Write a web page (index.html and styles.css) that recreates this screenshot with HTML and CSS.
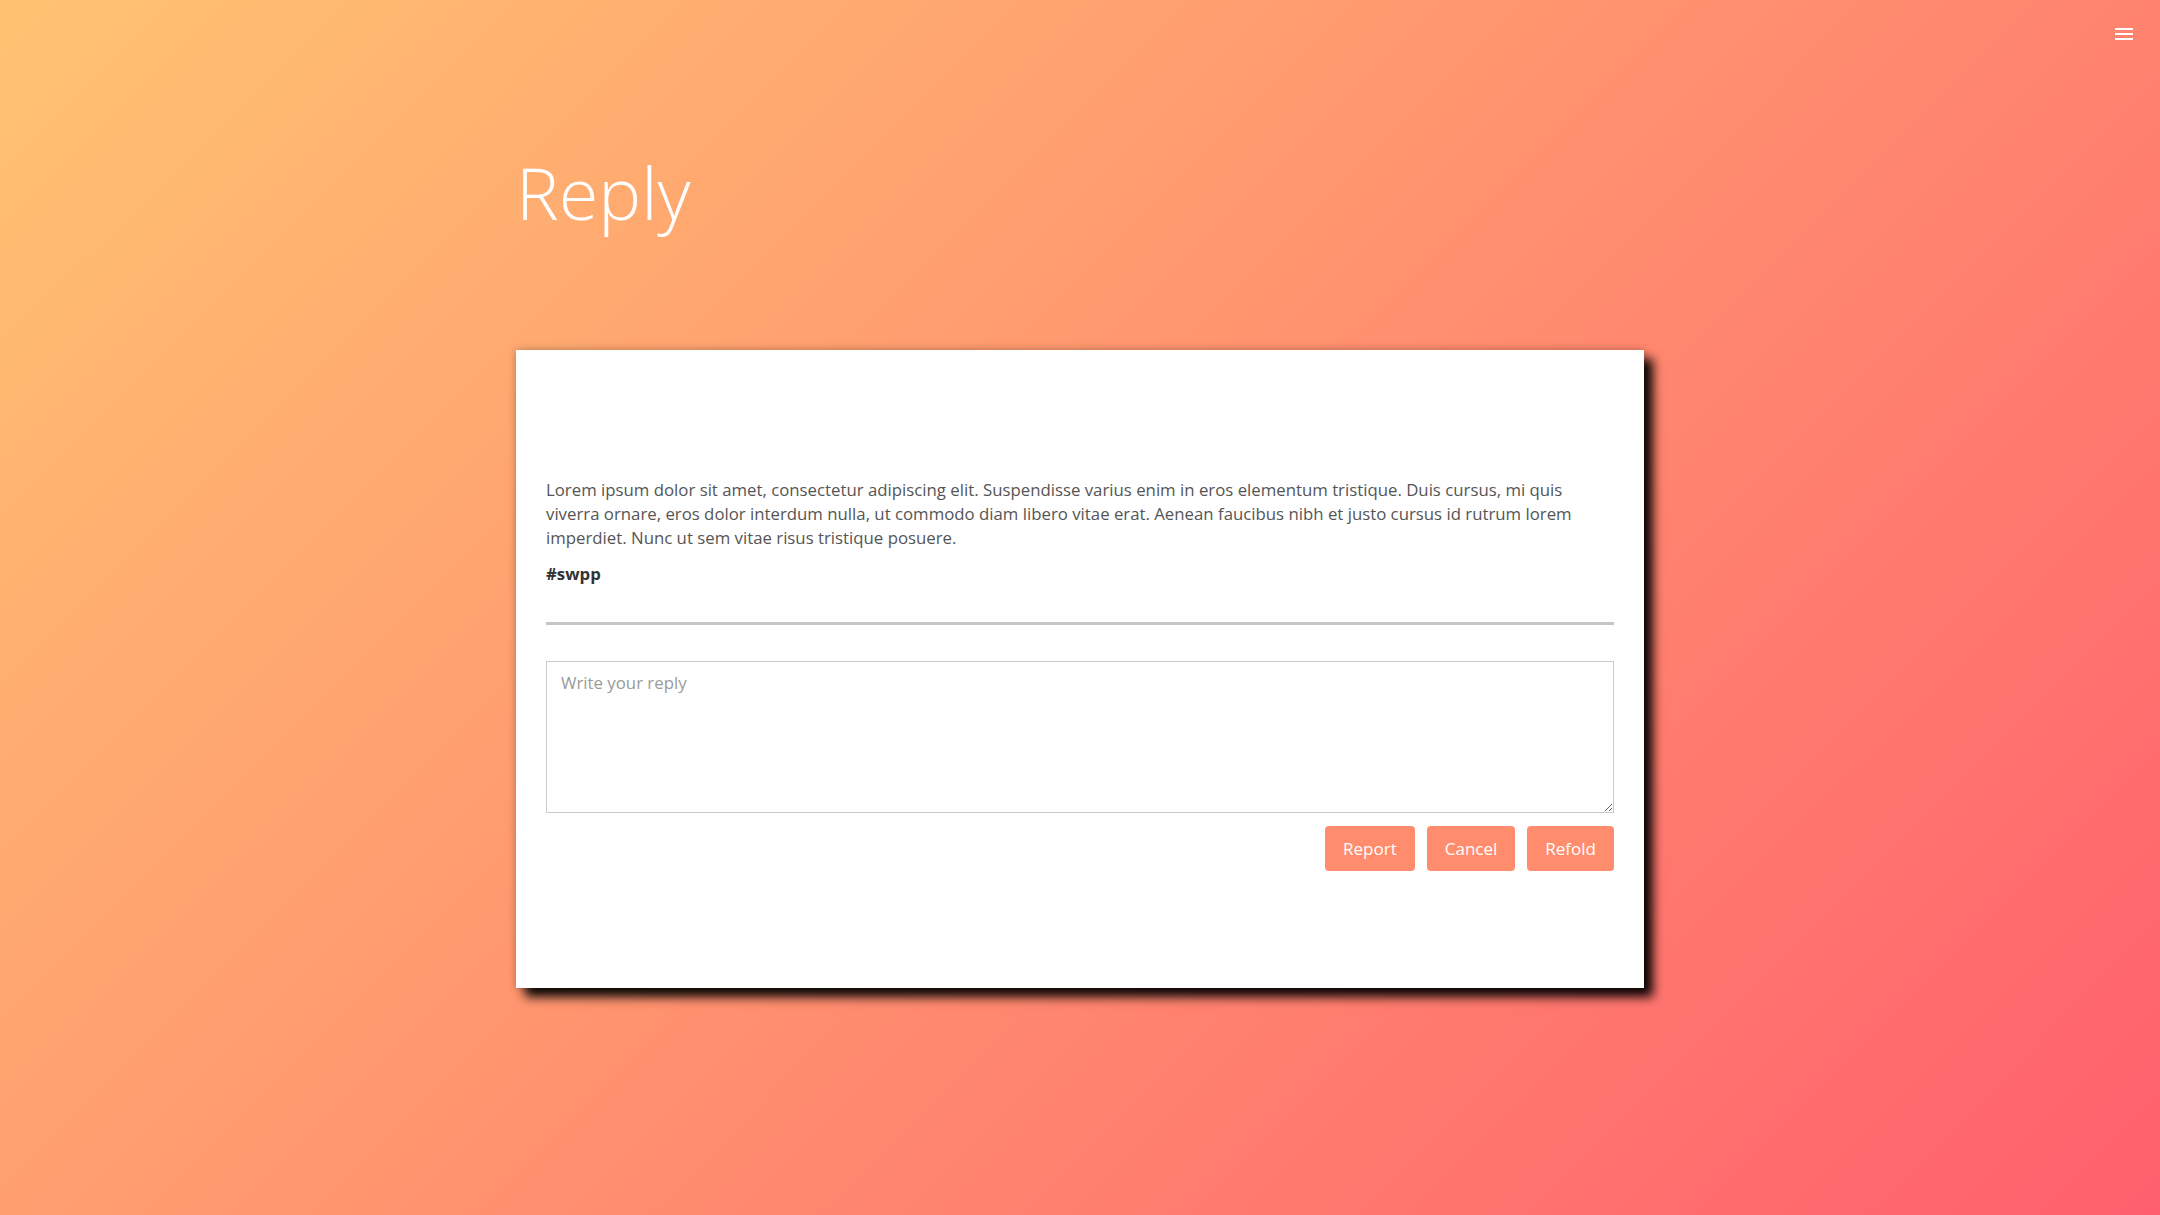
FILE: index.html
```html
<!DOCTYPE html>
<html lang="en">
<head>
<meta charset="utf-8">
<title>Reply</title>
<link rel="stylesheet" href="styles.css">
</head>
<body>
<button class="menu-btn" aria-label="Menu">
  <svg width="24" height="24" viewBox="0 0 24 24"><path fill="#fff" d="M3 18h18v-2H3v2zm0-5h18v-2H3v2zm0-7v2h18V6H3z"/></svg>
</button>
<main class="page">
  <h1 class="title">Reply</h1>
  <section class="card">
    <p class="post-text">Lorem ipsum dolor sit amet, consectetur adipiscing elit. Suspendisse varius enim in eros elementum tristique. Duis cursus, mi quis viverra ornare, eros dolor interdum nulla, ut commodo diam libero vitae erat. Aenean faucibus nibh et justo cursus id rutrum lorem imperdiet. Nunc ut sem vitae risus tristique posuere.</p>
    <p class="tag">#swpp</p>
    <hr class="divider">
    <textarea class="reply-box" placeholder="Write your reply"></textarea>
    <div class="actions">
      <button class="btn">Report</button>
      <button class="btn">Cancel</button>
      <button class="btn">Refold</button>
    </div>
  </section>
</main>
</body>
</html>
```

FILE: styles.css
```css
* { box-sizing: border-box; }
html, body { height: 100%; }
body {
  margin: 0;
  min-height: 1215px;
  font-family: "Open Sans", "Noto Sans", sans-serif;
  background: linear-gradient(135deg, #ffc371 0%, #ff5f6d 100%);
  background-attachment: fixed;
}
.menu-btn {
  position: absolute;
  top: 22px;
  right: 24px;
  width: 24px;
  height: 24px;
  padding: 0;
  border: 0;
  background: none;
  cursor: pointer;
}
.menu-btn svg { display: block; }
.page {
  width: 1128px;
  margin: 0 auto;
  padding-top: 149px;
}
.title {
  margin: 0 0 115px;
  font-size: 72px;
  line-height: 86px;
  font-weight: 300;
  color: #fff;
}
.card {
  background: #fff;
  padding: 128px 30px 117px;
  box-shadow: 0 0 8px rgba(0,0,0,0.25), 9px 9px 10px rgba(0,0,0,0.95);
}
.post-text {
  margin: 0;
  font-size: 16.8px;
  line-height: 24px;
  color: #555;
}
.tag {
  margin: 12px 0 0;
  font-size: 16.8px;
  line-height: 24px;
  font-weight: 700;
  color: #333;
}
.divider {
  margin: 36px 0 0;
  border: 0;
  border-top: 3px solid #c6c6c6;
  height: 0;
}
.reply-box {
  display: block;
  width: 100%;
  height: 152px;
  margin-top: 36px;
  padding: 9px 14px;
  border: 1px solid #cbcbcb;
  font-family: "Open Sans", "Noto Sans", sans-serif;
  font-size: 16.8px;
  line-height: 24px;
  color: #444;
  outline: none;
}
.reply-box::placeholder { color: #9a9a9a; }
.actions {
  display: flex;
  justify-content: flex-end;
  gap: 12px;
  margin-top: 13px;
}
.btn {
  height: 45px;
  padding: 0 18px;
  border: 0;
  border-radius: 4px;
  background: #ff8d6d;
  color: #fff;
  font-family: "Open Sans", "Noto Sans", sans-serif;
  font-size: 17px;
  font-weight: 500;
  cursor: pointer;
}
```
